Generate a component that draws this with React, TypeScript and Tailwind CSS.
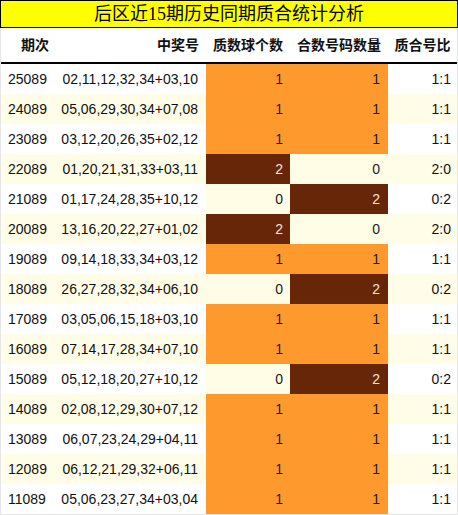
import React from 'react';

const rows: [string, string, number, number][] = [
  ['25089', '02,11,12,32,34+03,10', 1, 1],
  ['24089', '05,06,29,30,34+07,08', 1, 1],
  ['23089', '03,12,20,26,35+02,12', 1, 1],
  ['22089', '01,20,21,31,33+03,11', 2, 0],
  ['21089', '01,17,24,28,35+10,12', 0, 2],
  ['20089', '13,16,20,22,27+01,02', 2, 0],
  ['19089', '09,14,18,33,34+03,12', 1, 1],
  ['18089', '26,27,28,32,34+06,10', 0, 2],
  ['17089', '03,05,06,15,18+03,10', 1, 1],
  ['16089', '07,14,17,28,34+07,10', 1, 1],
  ['15089', '05,12,18,20,27+10,12', 0, 2],
  ['14089', '02,08,12,29,30+07,12', 1, 1],
  ['13089', '06,07,23,24,29+04,11', 1, 1],
  ['12089', '06,12,21,29,32+06,11', 1, 1],
  ['11089', '05,06,23,27,34+03,04', 1, 1],
];

// cell colour depends on the count
function countCls(n: number) {
  if (n === 1) return 'bg-[#fe9a2d] text-[#1a1a1a]';
  if (n === 2) return 'bg-[#662607] text-[#f3e4d6]';
  return 'bg-[#fffde6] text-[#1a1a1a]';
}

export default function App() {
  return (
    <div className="w-[458px] h-[515px] bg-white font-['Liberation_Sans','Noto_Sans_CJK_SC',sans-serif] text-[14px] text-[#111]">
      <div className="h-[28px] bg-[#ffff00] border border-black flex items-center justify-center font-['Liberation_Serif','Noto_Sans_CJK_SC',serif] text-[18px] text-black leading-none">
        后区近15期历史同期质合统计分析
      </div>
      <div className="border-x border-b border-[#e6e6e6]">
        <div className="grid grid-cols-[55px_150px_84px_98px_1fr] h-[36px] border-b-2 border-black font-bold text-[14px] items-center">
          <div className="pl-[20px]">期次</div>
          <div className="text-right pr-[7px]">中奖号</div>
          <div className="text-center">质数球个数</div>
          <div className="text-center">合数号码数量</div>
          <div className="text-center">质合号比</div>
        </div>
        {rows.map(([id, nums, p, c], i) => (
          <div
            key={id}
            className={`grid grid-cols-[55px_150px_84px_98px_1fr] h-[30px] items-stretch ${i % 2 === 1 ? 'bg-[#fffde8]' : 'bg-white'}`}
          >
            <div className="flex items-center pl-[7px]">{id}</div>
            <div className="flex items-center justify-end pr-[8px]">{nums}</div>
            <div className={`flex items-center justify-end pr-[7px] ${countCls(p)}`}>{p}</div>
            <div className={`flex items-center justify-end pr-[8px] ${countCls(c)}`}>{c}</div>
            <div className="flex items-center justify-end pr-[6px]">{p}:{c}</div>
          </div>
        ))}
      </div>
    </div>
  );
}
